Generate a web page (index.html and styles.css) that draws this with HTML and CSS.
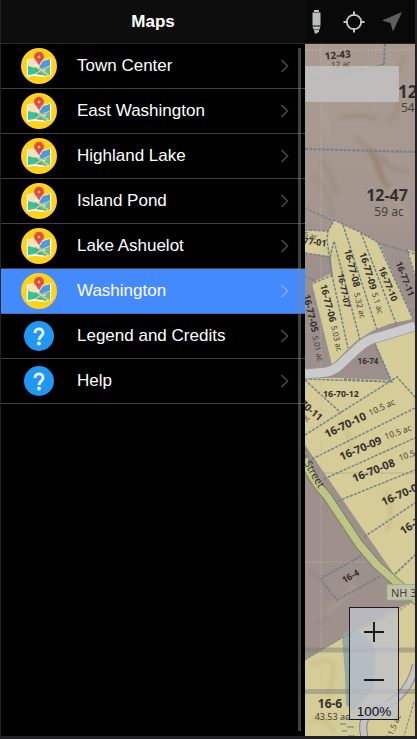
FILE: index.html
```html
<!DOCTYPE html>
<html lang="en">
<head>
<meta charset="utf-8">
<title>Maps</title>
<link rel="stylesheet" href="styles.css">
</head>
<body>
<svg class="defs" width="0" height="0">
  <symbol id="map-icon" viewBox="0 0 36 36">
    <circle cx="18" cy="18" r="18" fill="#ffd21c"/>
    <path d="M6.500 12l7-1 9 2 7-2v16l-8 1-8-1-7 1z" fill="#fff" stroke="#fff" stroke-width="1.400" stroke-linejoin="round"/>
    <path d="M7 12l7-1v9l-7-2z" fill="#fae0b2"/>
    <path d="M14 11l8 2v7l-8-1z" fill="#fbe9c8"/>
    <path d="M7 18l8 2 8 7-9-1-7 1z" fill="#32c595"/>
    <path d="M14 19l8 2 1 6-9-1z" fill="#48ac91"/>
    <path d="M22 13l7-2v9l-6 2-5-3z" fill="#499dda"/>
    <path d="M29 19v8l-6 1-8-8 7 4z" fill="#62c28a"/>
    <path d="M14 26l8-5 7-3M15 19l8 5 6 4" fill="none" stroke="#f3d087" stroke-width="1.200"/>
    <path d="M18 17.500C16 13 13 12 13 8.800a5 5 0 0 1 10 0C23 12 20 13 18 17.500z" fill="#e94b4d"/>
    <circle cx="18" cy="9" r="2.100" fill="#ffc328" stroke="#a53639" stroke-width=".8"/>
  </symbol>
  <symbol id="help-icon" viewBox="0 0 30 30">
    <circle cx="15" cy="15" r="15" fill="#2196f3"/>
    <path d="M11 12c0-5.500 8-5.500 8 0 0 3-4 3.300-4 7" fill="none" stroke="#e8f5ff" stroke-width="2.900"/>
    <circle cx="15" cy="22.500" r="1.900" fill="#e8f5ff"/>
  </symbol>
  <symbol id="chevron" viewBox="0 0 10 16">
    <path d="M1.500 2l6 6-6 6" fill="none" stroke="currentColor" stroke-width="1.500"/>
  </symbol>
</svg>
<div class="app">
  <aside class="menu">
    <h1 class="title">Maps</h1>
    <div class="scroll">
      <ul class="list">
        <li class="item"><svg class="map-icon"><use href="#map-icon"/></svg><span class="label">Town Center</span><svg class="chevron"><use href="#chevron"/></svg></li>
        <li class="item"><svg class="map-icon"><use href="#map-icon"/></svg><span class="label">East Washington</span><svg class="chevron"><use href="#chevron"/></svg></li>
        <li class="item"><svg class="map-icon"><use href="#map-icon"/></svg><span class="label">Highland Lake</span><svg class="chevron"><use href="#chevron"/></svg></li>
        <li class="item"><svg class="map-icon"><use href="#map-icon"/></svg><span class="label">Island Pond</span><svg class="chevron"><use href="#chevron"/></svg></li>
        <li class="item"><svg class="map-icon"><use href="#map-icon"/></svg><span class="label">Lake Ashuelot</span><svg class="chevron"><use href="#chevron"/></svg></li>
        <li class="item selected"><svg class="map-icon"><use href="#map-icon"/></svg><span class="label">Washington</span><svg class="chevron"><use href="#chevron"/></svg></li>
        <li class="item"><svg class="help-icon"><use href="#help-icon"/></svg><span class="label">Legend and Credits</span><svg class="chevron"><use href="#chevron"/></svg></li>
        <li class="item"><svg class="help-icon"><use href="#help-icon"/></svg><span class="label">Help</span><svg class="chevron"><use href="#chevron"/></svg></li>
      </ul>
      <div class="scrollbar"></div>
    </div>
  </aside>
  <main class="content">
    <header class="toolbar">
      <svg width="110" height="43" viewBox="305 0 110 43">
        <path d="M314 10h5v2h-5zM312.500 12.500h8v13h-8zM312.500 26.500h8l-1 3h-6zM314 30h5v2l-4 2z" fill="#bcbdbd"/>
        <g fill="none" stroke="#c6c6c6" stroke-width="1.800">
          <circle cx="354" cy="22" r="7.200"/>
          <path d="M354 11.500v4.500M354 28v4.500M343.500 22h4.500M360 22h4.500" stroke-width="2"/>
        </g>
        <path d="M402 12l-20 8.500 8.500 2.500 2.500 8.500z" fill="#5e5e5e"/>
      </svg>
    </header>
    <div class="map">
      <svg class="parcels" width="110" height="692" viewBox="305 44 110 692">
        <defs>
          <filter id="terrain" x="0" y="0" width="100%" height="100%">
            <feGaussianBlur stdDeviation="2"/>
          </filter>
          <linearGradient id="ground" x1="0" y1="0" x2="0" y2="1">
            <stop offset="0" stop-color="#aa9b92"/>
            <stop offset=".25" stop-color="#a4968e"/>
            <stop offset=".35" stop-color="#9c8e8b"/>
            <stop offset="1" stop-color="#9f918a"/>
          </linearGradient>
        </defs>
        <rect x="305" y="44" width="110" height="692" fill="url(#ground)"/>
        <g fill="#d5cc97">
          <path d="M305 230l23 1 6-11 26 12 19 11 34 76-24 5-17 7-17 11-20 20-3 3-20-82 20-10-2-17-25-3zM407 249l8 3v27zM305 378h36l46 2 5 2-18-42 41-15v280L305 445z"/>
          <path d="M305 660l42-25 68-35v136H305z"/>
        </g>
        <g class="relief" filter="url(#terrain)" fill="none">
          <path d="M356 138q16 12 20 28t20 28M405 56q-13 20-8 38t-9 28M322 160q10 15 14 36M338 118q25-5 40 2M382 155q6 18 28 16" stroke="#87674a" stroke-width="3"/>
          <path d="M370 150q8 8 10 20t10 18" stroke="#7a5a38" stroke-width="5"/>
          <path d="M313 176q20 17 19 41M308 570q16 4 20 30M315 625q22-13 32-36" stroke="#887970" stroke-width="3"/>
          <path d="M324 250q18 8 19 25M382 272q11 21 22 29M340 420q17 24 8 33M386 490q9 19 0 43M310 665q21-9 23 0t-5 32M310 722q17-9 24 12" stroke="#b39b58" stroke-width="3"/>
          <path d="M370 65q-6 20 5 40M327 55q-5 40 0 80M391 187q7 23 17 30M356 584l-28 30" stroke="#bcada1" stroke-width="4"/>
        </g>
        <path d="M342 636l9-8 16 9 9 13-2 38-11 12-9 10-8-5-1-30z" fill="#94aaa0"/>
        <path d="M346 718h7M340 724h6M347 727h7M342 731h5M348 736h7" stroke="#779d9a" stroke-width="1.300"/>
        <g fill="none" stroke="#71838d" stroke-width="1.500" stroke-dasharray="3 1.300">
          <path d="M305 149l110 3M385 44l-1 20" stroke-width="2.200"/>
          <path d="M305 208l28 13M384 64l-13 4-66 11"/>
          <path d="M305 253l25 4 2 18-20 9M328 230l-1 10 5 35M305 230l23 1 6-11 26 12 19 11 36 11M332 275l16 73M330 257l4-16 26 99M343 225l34 105M361 233l36 93M378 243l35 76M407 249l8 27M305 276l10 5"/>
          <path d="M344 379l48 3-18-40M305 379l87 3M305 380l36 33M305 435l92-58 18 20M312 459l103-51M324 479l91-41M338 501l77-31M364 537l51-34"/>
          <path d="M361 556l-41 23 17 21 44-24M395 574l20-19" stroke-width="1.800"/>
          <path d="M305 660l42-25 50-23 18-12M414 702l-10 34" stroke-width="1"/>
        </g>
        <g fill="none" stroke="#c3beb3" stroke-width=".8" stroke-dasharray="2 1.500" opacity=".7">
          <path d="M305 50h110M321 44v692M305 306h110M305 562h110"/>
        </g>
        <path d="M305 473h110" stroke="#8f8b75" stroke-width="1" opacity=".4"/>
        <g fill="none" stroke-linejoin="round">
          <path d="M305 374l22-2q9-2 17-11l13-12q10-10 22-12l36-11" stroke="#989898" stroke-width="10.500"/>
          <path d="M305 374l22-2q9-2 17-11l13-12q10-10 22-12l36-11" stroke="#cbcbcd" stroke-width="9"/>
          <path d="M300 446q7 29 27 50l32 48 17 20 42 38" stroke="#777e55" stroke-width="9"/>
          <path d="M300 446q7 29 27 50l32 48 17 20 42 38" stroke="#bec586" stroke-width="7.400"/>
          <path d="M416 665q-5 20-17 31t-26 16-8 27" stroke="#858580" stroke-width="8"/>
          <path d="M416 665q-5 20-17 31t-26 16-8 27" stroke="#c4c4c4" stroke-width="6"/>
        </g>
        <path d="M305 647.500h110v5H305zM305 689h110v5H305z" fill="#7b7775" opacity=".45"/>
        <g class="parcel-id" text-anchor="middle">
          <text transform="translate(338 58.500) rotate(-5)" font-size="10">12-43</text>
          <text x="398" y="98" font-size="17" text-anchor="start">12-4</text>
          <text x="387" y="201" font-size="16">12-47</text>
          <text transform="translate(313 245) rotate(7)" font-size="9">-77-01</text>
          <text transform="translate(307.500 314) rotate(77)" font-size="9.500">16-77-05</text>
          <text transform="translate(325 304) rotate(75)" font-size="9.500">16-77-06</text>
          <text transform="translate(341 291) rotate(78)" font-size="8.500">16-77-07</text>
          <text transform="translate(349 269) rotate(75)" font-size="9.500">16-77-08</text>
          <text transform="translate(365 272) rotate(73)" font-size="9.500">16-77-09</text>
          <text transform="translate(385 285) rotate(68)" font-size="9">16-77-10</text>
          <text transform="translate(402 280) rotate(69)" font-size="9">16-77-11</text>
          <text x="368" y="364" font-size="8">16-74</text>
          <text x="341" y="397" font-size="8.800">16-70-12</text>
          <text transform="translate(309 413) rotate(41)" font-size="10">70-11</text>
          <text transform="translate(347 428.500) rotate(-26)" font-size="11">16-70-10</text>
          <text transform="translate(362 452) rotate(-23)" font-size="11">16-70-09</text>
          <text transform="translate(375 474) rotate(-22)" font-size="11">16-70-08</text>
          <text transform="translate(404 497) rotate(-24)" font-size="11">16-70-07</text>
          <text transform="translate(403 535) rotate(-32)" font-size="11" text-anchor="start">16-70</text>
          <text transform="translate(352 579) rotate(-29)" font-size="8.800">16-4</text>
          <text x="330" y="708" font-size="12">16-6</text>
        </g>
        <g class="acreage" text-anchor="middle">
          <text transform="translate(341 67) rotate(-3)" font-size="8">12 ac</text>
          <text x="401" y="112" font-size="12" text-anchor="start">54 ac</text>
          <text x="389" y="215.500" font-size="12">59 ac</text>
          <text transform="translate(310 238) rotate(15)" font-size="7">5 ac</text>
          <text transform="translate(315 349) rotate(78)" font-size="8">5.01 ac</text>
          <text transform="translate(334 339) rotate(77)" font-size="8">5.03 ac</text>
          <text transform="translate(357 306) rotate(76)" font-size="8">5.32 ac</text>
          <text transform="translate(375 304) rotate(73)" font-size="8">5.1 ac</text>
          <text transform="translate(383 410) rotate(-25)" font-size="8.500">10.5 ac</text>
          <text transform="translate(399 435) rotate(-20)" font-size="8.500">10.5 ac</text>
          <text transform="translate(400 461) rotate(-20)" font-size="8.500" text-anchor="start">10.5 ac</text>
          <text transform="translate(305 420) rotate(41)" font-size="7">ac</text>
          <text x="332" y="719.500" font-size="9">43.53 ac</text>
          <text transform="translate(396 728) rotate(-68)" font-size="8">11.5 ac</text>
          <text transform="translate(309 472) rotate(60)" font-size="10.500" fill="#35392c">n Street</text>
        </g>
        <rect x="387" y="584.500" width="32" height="15.500" fill="#bfc3a5" stroke="#a3ab86" stroke-width=".8"/>
        <text class="route" x="391" y="597">NH 31</text>
      </svg>
      <div class="banner"></div>
      <div class="zoom-control">
        <svg width="48" height="96" viewBox="0 0 48 96"><path d="M14 24h20M24 14v20M14 72h20" stroke="#181818" stroke-width="1.900"/></svg>
        <span class="zoom-level">100%</span>
      </div>
    </div>
  </main>
</div>
</body>
</html>
```

FILE: styles.css
```css
* { box-sizing: border-box; }
body {
  margin: 0;
  background: #222224;
  font-family: "Liberation Sans", Arial, sans-serif;
  overflow: hidden;
}
.defs { position: absolute; }
.app {
  display: flex;
  width: 417px;
  height: 739px;
  padding: 0 2px 3px 1px;
}
.menu {
  display: flex;
  flex-direction: column;
  width: 304px;
  background: #000;
}
.title {
  height: 44px;
  margin: 0;
  border-bottom: 1px solid #2b2b2b;
  background: #0d0d0d;
  color: #fff;
  font-size: 17px;
  line-height: 43px;
  text-align: center;
}
.scroll { position: relative; flex: 1; }
.list { margin: 0; padding: 0; list-style: none; }
.item {
  display: flex;
  align-items: center;
  height: 45px;
  padding: 0 15px 0 20px;
  border-bottom: 1px solid #414141;
  color: #fff;
  font-size: 17px;
}
.selected { background: #448aff; border-color: #3c70c9; }
.map-icon { width: 36px; height: 36px; }
.help-icon { width: 30px; height: 30px; margin: 0 3px; }
.label { flex: 1; margin-left: 20px; line-height: 20px; }
.chevron { width: 10px; height: 16px; color: #4a4a4a; }
.selected .chevron { color: #7caeff; }
.scrollbar {
  position: absolute;
  top: 4px;
  right: 4px;
  bottom: 5px;
  width: 3px;
  background: rgba(132, 132, 132, .5);
}
.content { width: 110px; overflow: hidden; }
.toolbar {
  height: 44px;
  border-bottom: 1px solid #242424;
  background: #090909;
}
.toolbar svg, .parcels { display: block; }
.map { position: relative; height: 692px; overflow: hidden; }
.relief { opacity: .32; }
.parcel-id {
  fill: #32302f;
  font-family: "Noto Sans", sans-serif;
  font-weight: 700;
}
.acreage, .route { fill: #454038; font-family: "Noto Sans", sans-serif; }
.route { font-size: 11px; }
.banner {
  position: absolute;
  top: 22px;
  left: 0;
  width: 94px;
  height: 36px;
  background: rgba(196, 196, 196, .84);
}
.zoom-control {
  position: absolute;
  top: 563px;
  left: 44px;
  width: 50px;
  height: 113px;
  border: 1px solid #1c1c1c;
  background: rgba(190, 194, 202, .8);
  text-align: center;
}
.zoom-control svg { display: block; }
.zoom-level {
  display: block;
  color: #0c0c0c;
  font-size: 13.5px;
  line-height: 15px;
}
```
